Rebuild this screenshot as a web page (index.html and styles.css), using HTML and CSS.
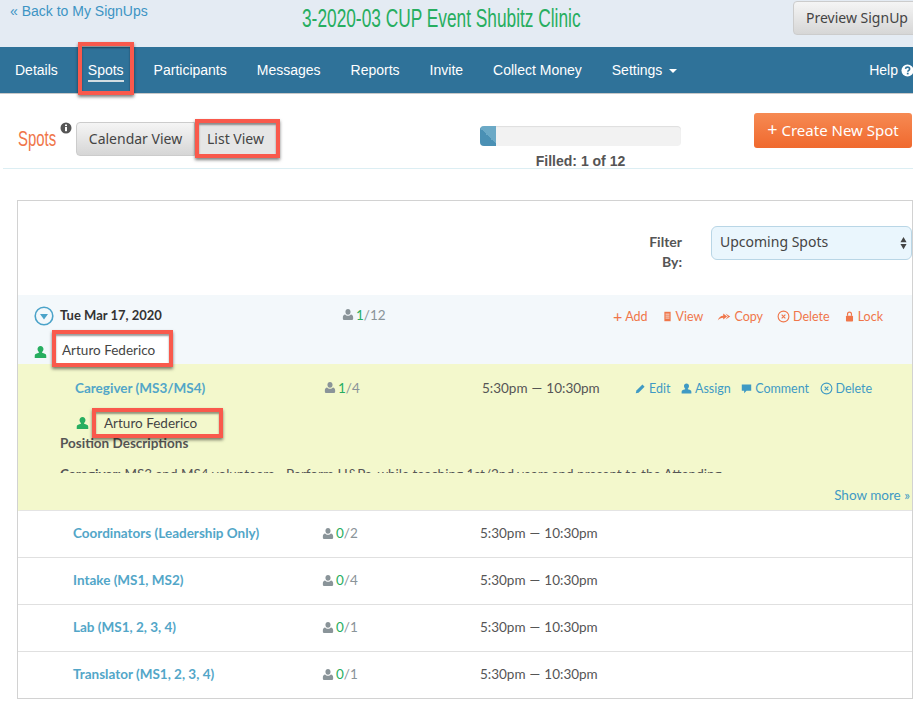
FILE: index.html
```html
<!DOCTYPE html>
<html lang="en">
<head>
<meta charset="utf-8">
<title>3-2020-03 CUP Event Shubitz Clinic</title>
<link rel="stylesheet" href="styles.css">
</head>
<body>
<svg class="defs" width="0" height="0" aria-hidden="true">
  <symbol id="user" viewBox="0 0 14 14"><path d="M7 0.500c2 0 3.200 1.500 3.200 3.400 0 1.400-.7 2.700-1.600 3.300 0 .5.3.8 1 1 1.900.5 3.600 1.100 3.600 2.800v2.500H.8v-2.500c0-1.700 1.700-2.300 3.600-2.800.7-.2 1-.5 1-1C4.500 6.600 3.800 5.300 3.800 3.900 3.800 2 5 .5 7 .5z"/></symbol>
  <symbol id="plainuser" viewBox="0 0 14 14"><path d="M7 .5c1.800 0 3 1.300 3 3.200 0 1.900-1.200 3.600-3 3.600S4 5.600 4 3.700C4 1.800 5.200.5 7 .5zM3.600 7c.8 1 2 1.500 3.400 1.500S9.600 8 10.400 7c1.700.2 2.600 1.500 2.600 3.300v1.600c0 1-.8 1.600-1.800 1.600H2.800C1.800 13.500 1 12.900 1 11.900v-1.600C1 8.500 1.900 7.200 3.600 7z"/></symbol>
  <symbol id="xcircle" viewBox="0 0 14 14"><circle cx="7" cy="7" r="5.800" fill="none" stroke="currentColor" stroke-width="1.200"/><path d="M5 5l4 4M9 5l-4 4" fill="none" stroke="currentColor" stroke-width="1.200"/></symbol>
</svg>

<header class="top">
  <a class="back" href="#">« Back to My SignUps</a>
  <h1 class="title">3-2020-03 CUP Event Shubitz Clinic</h1>
  <button class="btn btn-preview" type="button">Preview SignUp</button>
</header>

<nav class="nav">
  <a href="#">Details</a>
  <a class="current" href="#">Spots</a>
  <a href="#">Participants</a>
  <a href="#">Messages</a>
  <a href="#">Reports</a>
  <a href="#">Invite</a>
  <a href="#">Collect Money</a>
  <a href="#">Settings <i class="caret"></i></a>
  <a class="help" href="#">Help
    <svg class="help-icon" viewBox="0 0 14 14"><circle cx="7" cy="7" r="6.500" fill="#fff"/><path d="M4.800 5.300C5 4 5.900 3.400 7.100 3.400c1.300 0 2.200.8 2.200 1.900 0 1.700-2 1.600-2 3.100" fill="none" stroke="#2f7299" stroke-width="1.700"/><rect x="6.300" y="9.400" width="1.900" height="1.800" fill="#2f7299"/></svg>
  </a>
</nav>

<section class="toolbar">
  <div class="toolbar-left">
    <h2 class="spots-title">Spots</h2>
    <svg class="info" viewBox="0 0 12 12"><circle cx="6" cy="6" r="5.500" fill="#555"/><rect x="5" y="5" width="2" height="4.200" fill="#fff"/><rect x="5" y="2.500" width="2" height="1.600" fill="#fff"/></svg>
    <button class="btn btn-cal" type="button">Calendar View</button>
    <button class="btn btn-list" type="button">List View</button>
  </div>
  <div class="progress-block">
    <div class="progress"><div class="progress-fill"></div></div>
    <div class="filled">Filled: 1 of 12</div>
  </div>
  <button class="create" type="button"><span class="plus">+</span> Create New Spot</button>
</section>

<main class="panel">
  <div class="filter">
    <label class="filter-label">Filter<br>By:</label>
    <div class="select">
      <span class="select-text">Upcoming Spots</span>
      <svg class="select-arrows" viewBox="0 0 8 14"><path d="M4 0l3.500 6H.5zM4 14L.5 8h7z"/></svg>
    </div>
  </div>

  <div class="date-row">
    <div class="date-main">
      <svg class="toggle" viewBox="0 0 20 20"><circle cx="10" cy="10" r="8.800" fill="none" stroke="#4ba3c9" stroke-width="1.600"/><path d="M6 8h8l-4 5.500z" fill="#4ba3c9"/></svg>
      <strong class="date">Tue Mar 17, 2020</strong>
      <span class="count count-date"><svg class="ico-user"><use href="#plainuser"/></svg> <b>1</b>/12</span>
      <div class="actions actions-orange">
        <a href="#"><span class="a-plus">+</span> Add</a>
        <a href="#"><svg class="ico" viewBox="0 0 14 14"><path d="M3 1h8v12H3z" fill="currentColor"/><path d="M4.500 4h5M4.500 6.500h5M4.500 9h5" stroke="#f3f8fb" stroke-width="1"/></svg> View</a>
        <a href="#"><svg class="ico ico-wide" viewBox="0 0 18 14"><path d="M1 12c1-4 4-6 7-6V3l5 4-5 4V8.500c-3 0-5 1-7 3.500z" fill="currentColor"/><path d="M11 3l6 4-6 4 3-4z" fill="currentColor"/></svg> Copy</a>
        <a href="#"><svg class="ico ico-x"><use href="#xcircle"/></svg> Delete</a>
        <a href="#"><svg class="ico" viewBox="0 0 14 14"><path d="M4.500 6V4a2.500 2.500 0 015 0v2" fill="none" stroke="currentColor" stroke-width="1.500"/><rect x="2.500" y="6" width="9" height="7.500" rx="1" fill="currentColor"/></svg> Lock</a>
      </div>
    </div>
    <div class="person person-date">
      <svg class="ico-green ico-green-date"><use href="#user"/></svg>
      <span class="name name-date">Arturo Federico</span>
    </div>
  </div>

  <div class="spot-open">
    <div class="spot-line spot-line-open">
      <a class="spot-name" href="#">Caregiver (MS3/MS4)</a>
      <span class="count"><svg class="ico-user"><use href="#plainuser"/></svg> <b>1</b>/4</span>
      <span class="time">5:30pm — 10:30pm</span>
      <div class="actions actions-blue">
        <a href="#"><svg class="ico" viewBox="0 0 14 14"><path d="M1 13l.8-3.500L9.500 2l2.700 2.700-7.700 7.600z" fill="currentColor"/></svg> Edit</a>
        <a href="#"><svg class="ico"><use href="#user"/></svg> Assign</a>
        <a href="#"><svg class="ico" viewBox="0 0 14 14"><path d="M1 2h12v8H7l-3 3v-3H1z" fill="currentColor"/></svg> Comment</a>
        <a href="#"><svg class="ico ico-x"><use href="#xcircle"/></svg> Delete</a>
      </div>
    </div>
    <div class="person person-spot">
      <svg class="ico-green"><use href="#user"/></svg>
      <span class="name name-spot">Arturo Federico</span>
    </div>
    <h3 class="desc-title">Position Descriptions</h3>
    <p class="desc"><b>Caregiver:</b> MS3 and MS4 volunteers - Perform H&amp;Ps, while teaching 1st/2nd years and present to the Attending</p>
    <a class="more" href="#">Show more »</a>
  </div>

  <div class="spot-line"><a class="spot-name" href="#">Coordinators (Leadership Only)</a><span class="count"><svg class="ico-user"><use href="#plainuser"/></svg> <b>0</b>/2</span><span class="time">5:30pm — 10:30pm</span></div>
  <div class="spot-line"><a class="spot-name" href="#">Intake (MS1, MS2)</a><span class="count"><svg class="ico-user"><use href="#plainuser"/></svg> <b>0</b>/4</span><span class="time">5:30pm — 10:30pm</span></div>
  <div class="spot-line"><a class="spot-name" href="#">Lab (MS1, 2, 3, 4)</a><span class="count"><svg class="ico-user"><use href="#plainuser"/></svg> <b>0</b>/1</span><span class="time">5:30pm — 10:30pm</span></div>
  <div class="spot-line"><a class="spot-name" href="#">Translator (MS1, 2, 3, 4)</a><span class="count"><svg class="ico-user"><use href="#plainuser"/></svg> <b>0</b>/1</span><span class="time">5:30pm — 10:30pm</span></div>
</main>
</body>
</html>
```
FILE: styles.css
```css
* { box-sizing: border-box; }
html, body { margin: 0; height: 100%; }
body { width: 913px; height: 702px; overflow: hidden; background: #fff; font-family: "Lato", "Liberation Sans", sans-serif; font-size: 14px; color: #555; }
a { text-decoration: none; color: inherit; }
h1, h2, h3, p { margin: 0; }
.defs { position: absolute; }

.top { height: 47px; background: #e4ebf3; display: flex; align-items: flex-start; padding-left: 10px; overflow: hidden; }
.back { font-family: "Liberation Sans", sans-serif; font-size: 14px; line-height: 22px; color: #3d94c4; width: 292px; flex: none; }
.title { width: 279px; flex: none; margin-top: 3px; font-family: "Liberation Sans", sans-serif; font-weight: 400; font-size: 25px; line-height: 30px; color: #27ae60; white-space: nowrap; transform: scaleX(.692); transform-origin: left center; }
.btn { font-family: "Noto Sans", sans-serif; font-size: 14px; color: #444; background: linear-gradient(#f5f5f5, #d6d6d6); border: 1px solid #ccc; border-radius: 4px; padding: 0; height: 34px; cursor: pointer; }
.btn-preview { width: 128px; margin-left: 212px; margin-top: 1px; flex: none; text-align: left; padding: 0 0 2px 12px; }

.nav { height: 47px; background: #2f7299; border-bottom: 1px solid #c8c8c8; display: flex; align-items: center; gap: 30px; padding-left: 15px; font-family: "Liberation Sans", sans-serif; font-size: 14px; color: #fff; }
.nav a { position: relative; white-space: nowrap; }
.current::before { content: ""; position: absolute; left: 0; right: 0; bottom: -4px; height: 2px; background: #d3dde2; }
.current::after { content: ""; position: absolute; left: -10px; right: -10px; top: -20px; height: 45px; border: 4px solid #f9594c; box-shadow: 0 2px 3px rgba(0,0,0,.5), inset 0 2px 2px rgba(0,0,0,.4); }
.caret { display: inline-block; margin-left: 3px; vertical-align: middle; border-top: 4px solid #fff; border-left: 4px solid transparent; border-right: 4px solid transparent; }
.nav .help { margin-left: auto; display: flex; align-items: center; gap: 3px; margin-right: -1px; }
.help-icon { width: 13px; height: 13px; }

.toolbar { height: 75px; border-bottom: 1px solid #dceef3; margin-left: 3px; display: flex; align-items: flex-start; }
.toolbar-left { width: 477px; padding: 25px 0 0 15px; display: flex; align-items: center; flex: none; }
.spots-title { font-family: "Liberation Sans", sans-serif; font-weight: 400; font-size: 22px; color: #f0764a; width: 38px; flex: none; white-space: nowrap; transform: scaleX(.68); transform-origin: left center; }
.info { width: 12px; height: 12px; margin: -22px 4px 0 4px; flex: none; }
.btn-cal { width: 119px; flex: none; border-radius: 4px 0 0 4px; }
.btn-list { width: 85px; height: 39px; flex: none; padding-right: 4px; background: #e6e6e6; border: 4px solid #f9594c; border-radius: 0; box-shadow: 0 2px 3px rgba(0,0,0,.5), inset 0 2px 2px rgba(0,0,0,.4); }
.progress-block { width: 201px; padding-top: 32px; flex: none; }
.progress { height: 20px; background: #f2f2f2; border-radius: 4px; overflow: hidden; box-shadow: inset 0 1px 1px rgba(0,0,0,.08); }
.progress-fill { width: 16px; height: 100%; background: linear-gradient(45deg, #4a90b4 50%, #6ba9c6 50%); }
.filled { font-family: "Liberation Sans", sans-serif; font-weight: 700; font-size: 14px; line-height: 16px; text-align: center; color: #555; margin-top: 7px; }
.create { margin: 19px 0 0 73px; width: 158px; height: 35px; border: 0; border-radius: 3px; background: linear-gradient(#f68a53, #f0692e); color: #fff; font-family: "Noto Sans", sans-serif; font-size: 15px; padding: 0 0 2px; flex: none; }
.plus { font-size: 18px; line-height: 1; }

.panel { margin: 31px 0 0 17px; width: 896px; height: 499px; border: 1px solid #d2d2d2; }
.filter { height: 94px; padding-top: 25px; display: flex; align-items: flex-start; }
.filter-label { width: 664px; padding-top: 6px; text-align: right; font-weight: 700; font-size: 14px; line-height: 20px; color: #555; }
.select { margin-left: 29px; width: 201px; height: 34px; background: #eaf6fd; border: 1px solid #b9d6e6; border-radius: 6px; display: flex; align-items: center; justify-content: space-between; padding: 0 4px 0 8px; font-family: "Noto Sans", sans-serif; font-size: 14px; color: #444; }
.select-text { margin-top: -4px; }
.select-arrows { width: 7px; height: 14px; fill: #444; margin-top: -1px; }

.date-row { height: 69px; background: #f3f8fb; }
.date-main { height: 38px; padding: 1px 0 0 16px; display: flex; align-items: center; }
.toggle { width: 20px; height: 20px; flex: none; margin-top: 2px; }
.date { width: 289px; flex: none; padding-left: 6px; font-size: 13px; font-weight: 700; color: #333; }
.count { color: #8a9499; font-size: 13.500px; display: inline-flex; align-items: center; }
.count b { color: #27ae60; font-weight: 400; margin-left: 3px; }
.count-date { width: 156px; flex: none; }
.ico-user { width: 12px; height: 13px; margin: 0 -1px 0 -1px; fill: #8a9499; flex: none; }
.ico-green { width: 13px; height: 14px; fill: #27ae60; flex: none; }
.ico-green-date { margin-top: 6px; }
.actions { display: flex; font-size: 12.500px; white-space: nowrap; }
.actions a { display: inline-flex; align-items: center; gap: 3px; }
.ico { width: 11px; height: 11px; fill: currentColor; }
.ico-wide { width: 14px; }
.ico-x { width: 13px; height: 13px; }
.a-plus { font-size: 16px; line-height: 1; }
.actions-orange { color: #f0764a; gap: 14px; margin-left: 114px; margin-top: 3px; }
.actions-blue { color: #3f9ac4; gap: 10.500px; margin-top: 1px; }

.person { display: flex; align-items: center; }
.person-date { height: 31px; padding-left: 16px; }
.name { display: flex; align-items: center; flex: none; font-size: 13.500px; color: #444; border: 4px solid #f9594c; box-shadow: 0 2px 3px rgba(0,0,0,.5), inset 0 2px 2px rgba(0,0,0,.4); position: relative; }
.name-date { width: 121px; height: 37px; margin-left: 5px; padding: 3px 0 0 6px; background: #fff; }
.name-spot { width: 131px; height: 30px; margin-left: 3px; padding-left: 8px; }

.spot-open { height: 147px; background: #f3f8cc; border-left: 2px solid #f3f8cc; border-bottom: 1px solid #e4e4e4; }
.spot-open .spot-line { border: 0; }
.spot-line { height: 47px; display: flex; align-items: center; padding: 0 0 2px 55px; border-bottom: 1px solid #e0e0e0; }
.spot-line:last-child { border-bottom: 0; height: 46px; }
.spot-open .spot-line-open { height: 44px; padding: 3px 0 0 55px; }
.spot-name { width: 250px; flex: none; font-weight: 700; font-size: 13.500px; color: #52a6c8; }
.spot-line .count { width: 157px; flex: none; }
.time { width: 153px; flex: none; font-size: 13.500px; color: #555; word-spacing: .6px; }
.person-spot { height: 30px; padding-left: 56px; }
.desc-title { margin: -4px 0 0 40px; font-size: 13.500px; line-height: 18px; font-weight: 700; color: #555; }
.desc { margin-left: 40px; height: 21px; padding-top: 13px; overflow: hidden; font-size: 13.500px; line-height: 18px; color: #555; white-space: nowrap; }
.more { display: block; margin-top: 13px; padding-right: 2px; text-align: right; font-size: 13.500px; line-height: 18px; color: #3f9ac4; }
```
